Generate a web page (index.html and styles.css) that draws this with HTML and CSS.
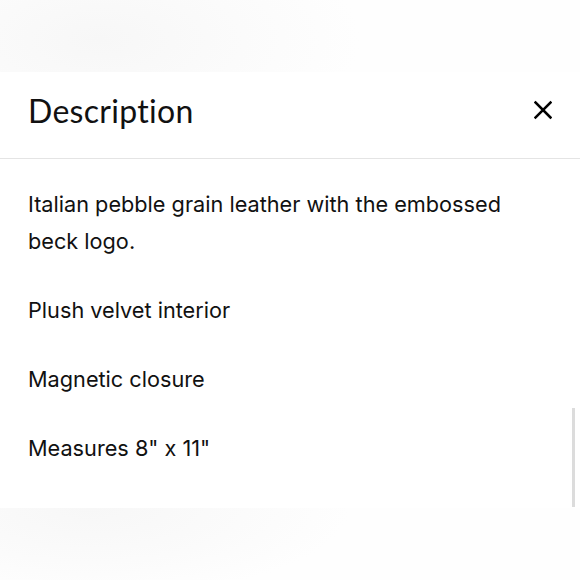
FILE: index.html
```html
<!DOCTYPE html>
<html lang="en">
<head>
<meta charset="utf-8">
<link rel="stylesheet" href="styles.css">
</head>
<body>
<div class="backdrop backdrop-top"></div>
<section class="sheet">
  <header class="sheet-header">
    <h1 class="sheet-title">Description</h1>
    <button class="close" aria-label="Close">
      <svg width="18" height="20" viewBox="0 0 18 20"><path d="M1.5 2.5 L16.5 17.5 M16.5 2.5 L1.5 17.5" stroke="#000" stroke-width="2.5" stroke-linecap="square" fill="none"/></svg>
    </button>
  </header>
  <div class="sheet-body">
    <p>Italian pebble grain leather with the embossed beck logo.</p>
    <p>Plush velvet interior</p>
    <p>Magnetic closure</p>
    <p>Measures 8" x 11"</p>
  </div>
  <div class="scrollbar"></div>
</section>
<div class="backdrop backdrop-bottom"></div>
</body>
</html>
```
FILE: styles.css
```css
html, body {
  margin: 0;
  padding: 0;
  background: #fff;
}
body {
  width: 580px;
  height: 580px;
  overflow: hidden;
}
.backdrop {
  height: 72px;
  background: radial-gradient(ellipse 260px 120px at 100px 40px, #f7f7f7 0%, #fbfbfb 55%, #fefefe 100%);
}
.backdrop-bottom {
  height: 72px;
  background: radial-gradient(ellipse 260px 90px at 90px 0px, #f7f7f7 0%, #fbfbfb 60%, #fefefe 100%);
}
.sheet {
  position: relative;
  background: #fff;
  height: 436px;
}
.sheet-header {
  height: 87px;
  box-sizing: border-box;
  padding: 0 28px 10px;
  border-bottom: 1px solid #e4e4e4;
  display: flex;
  align-items: center;
  justify-content: space-between;
}
.sheet-title {
  margin: 0;
  font-family: "Lato", "Noto Sans", sans-serif;
  font-weight: 400;
  font-size: 32px;
  color: #111;
  letter-spacing: 0.3px;
}
.close {
  border: 0;
  background: none;
  padding: 0;
  width: 18px;
  height: 20px;
  display: flex;
}
.sheet-body {
  padding: 27px 28px 0;
  font-family: "Inter", "Roboto", sans-serif;
  font-size: 21.7px;
  line-height: 37px;
  color: #111;
}
.sheet-body p {
  margin: 0 0 32px;
}
.scrollbar {
  position: absolute;
  right: 5px;
  bottom: 1px;
  width: 3px;
  height: 99px;
  background: #dcdcdc;
}
```
